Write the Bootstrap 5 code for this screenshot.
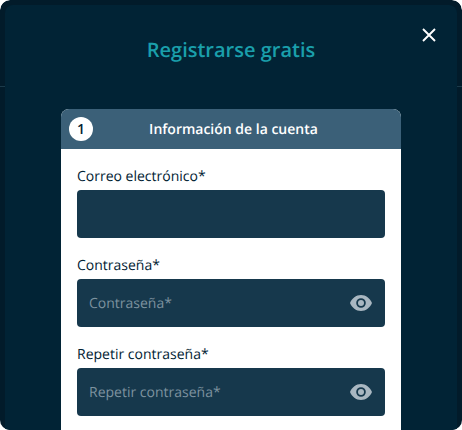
<!DOCTYPE html>
<html lang="es"><head><meta charset="utf-8">
<link rel="stylesheet" href="https://cdn.jsdelivr.net/npm/bootstrap@5.3.0/dist/css/bootstrap.min.css">
<style>
html,body{height:430px;overflow:hidden;background:#fff;font-family:"Open Sans",sans-serif;text-rendering:geometricPrecision}
.shell{height:440px;background:#021b2a;border-radius:10px 10px 0 0;padding:5px 5px 0;overflow:hidden;position:relative}
.outer-rule{height:1px;background:#1b3a4a;left:0;right:0;top:86px}
.corner-clip{height:430px;overflow:hidden;border-radius:10px}
.panel{height:100%;background:#012335;border-radius:8px 8px 0 0;overflow:hidden;position:relative}
.top-bar{height:81px}
.title-txt{color:#1a9fab;font-size:20px;font-weight:600;margin:0;line-height:27px;padding-top:31px}
.close-x{left:400px;top:14px;width:48px;height:32px;background:none}
.step-card{width:340px;margin:23px auto 0;border-radius:8px 8px 0 0;background:#fff;height:400px}
.step-head{height:40px;background:#3b6078;border-radius:8px 8px 0 0;color:#fff;font-size:14px;font-weight:600;padding-left:5px}
.step-num{left:8px;top:8px;width:24px;height:24px;background:#fff;color:#012233;font-size:14px;font-weight:600}
.form-wrap{padding:18px 16px 0}
.field-lab{color:#012233;font-size:14px;line-height:19px;margin-bottom:4px;display:block}
.field-box{height:48px;background:#16384c;border-radius:4px;color:#7d929f;font-size:14px;padding:0 13px 0 12px;margin-bottom:18px}
.eye-ico{width:22px;height:16px}
</style></head><body>
<div class="corner-clip"><div class="shell">
<div class="outer-rule position-absolute"></div>
<div class="panel">
<div class="top-bar text-center"><h1 class="title-txt">Registrarse gratis</h1></div>
<button class="close-x btn border-0 p-0 position-absolute d-flex align-items-center justify-content-center" aria-label="Cerrar">
<svg width="14" height="14" viewBox="0 0 14 14"><path d="M1 1l12 12M13 1L1 13" stroke="#fff" stroke-width="1.9" fill="none"/></svg></button>
<div class="step-card">
<div class="step-head position-relative d-flex align-items-center justify-content-center"><span class="step-num position-absolute rounded-circle d-flex align-items-center justify-content-center">1</span>Información de la cuenta</div>
<div class="form-wrap">
<label class="field-lab">Correo electrónico*</label>
<div class="field-box"></div>
<label class="field-lab">Contraseña*</label>
<div class="field-box d-flex align-items-center justify-content-between"><span>Contraseña*</span>
<svg class="eye-ico" viewBox="0 0 22 16"><path fill-rule="evenodd" fill="#a9b7c1" d="M11 0C6 0 2 3.300 0 8c2 4.700 6 8 11 8s9-3.300 11-8c-2-4.700-6-8-11-8zm0 3.200a4.800 4.800 0 1 1 0 9.600a4.800 4.800 0 0 1 0-9.600z"/><circle cx="11" cy="8" r="3" fill="#a9b7c1"/></svg></div>
<label class="field-lab">Repetir contraseña*</label>
<div class="field-box d-flex align-items-center justify-content-between"><span>Repetir contraseña*</span>
<svg class="eye-ico" viewBox="0 0 22 16"><path fill-rule="evenodd" fill="#a9b7c1" d="M11 0C6 0 2 3.300 0 8c2 4.700 6 8 11 8s9-3.300 11-8c-2-4.700-6-8-11-8zm0 3.200a4.800 4.800 0 1 1 0 9.600a4.800 4.800 0 0 1 0-9.600z"/><circle cx="11" cy="8" r="3" fill="#a9b7c1"/></svg></div>
</div></div>
</div></div></div>
<script src="https://cdn.jsdelivr.net/npm/bootstrap@5.3.0/dist/js/bootstrap.bundle.min.js"></script>
</body></html>
